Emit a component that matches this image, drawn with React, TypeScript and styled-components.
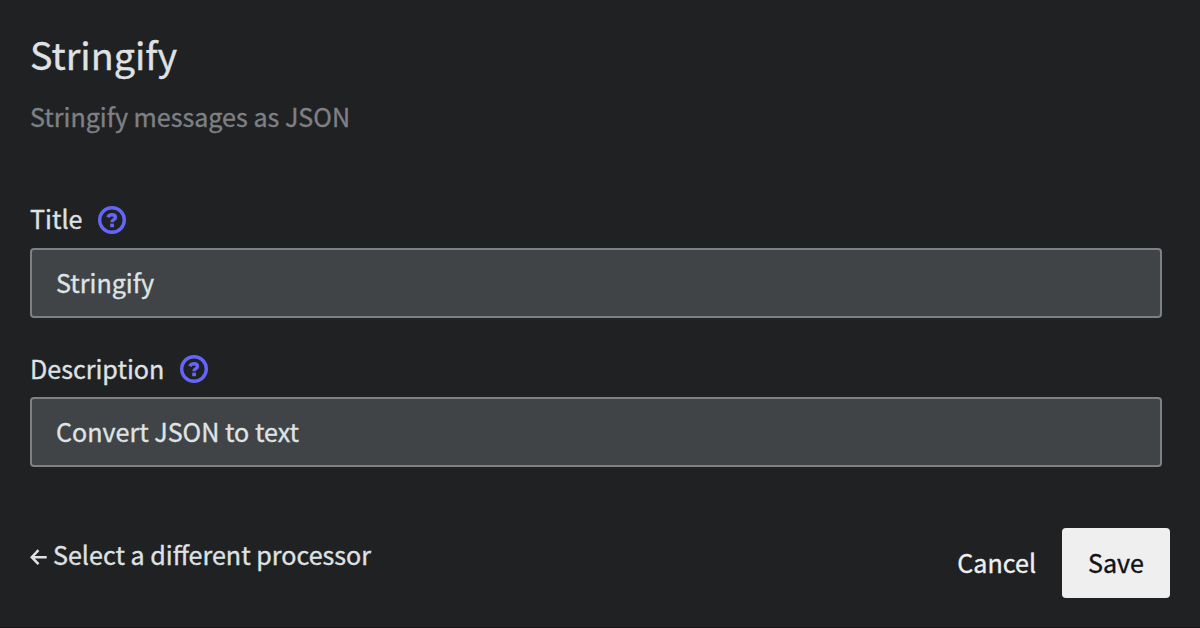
import React from "react";
import styled, { createGlobalStyle } from "styled-components";

const GlobalStyle = createGlobalStyle`
  *, *::before, *::after { box-sizing: border-box; }
  body {
    margin: 0;
    background: #202123;
    color: #dfe1e3;
    font-family: "Noto Sans CJK SC", "Noto Sans", sans-serif;
    font-size: 25.1px;
    line-height: 36px;
    -webkit-text-stroke: 0.35px currentColor;
  }
`;

const Panel = styled.main`
  display: flex;
  flex-direction: column;
  height: 628px;
  padding: 24px 30px 29px;
  border-bottom: 1px solid #1a1419;
  overflow: hidden;
`;

const Heading = styled.h1`
  margin: 0;
  font-size: 37.7px;
  font-weight: 400;
  line-height: 60px;
`;

const Subtitle = styled.p`
  margin: 14px 0 0;
  color: #7e8084;
`;

const Form = styled.form`
  display: flex;
  flex-direction: column;
  flex: 1;
  margin-top: 68px;
`;

const Field = styled.div`
  display: flex;
  flex-direction: column;
  gap: 10px;
  width: 1132px;
  margin-bottom: 33px;
`;

const LabelRow = styled.div<{ $lift: number }>`
  display: flex;
  align-items: center;
  gap: 15.5px;
  height: 36px;

  label {
    padding-bottom: ${(p) => p.$lift}px;
  }
`;

const HelpIcon = styled.svg`
  display: block;
  width: 28px;
  height: 28px;
  color: #6466fa;
`;

const Input = styled.input`
  height: 70px;
  padding: 0 24px 2px;
  border: 2px solid #7e8084;
  border-radius: 4px;
  outline: none;
  background: #404447;
  color: #dfe3e5;
  font: inherit;
  -webkit-text-stroke: inherit;
`;

const Footer = styled.footer`
  display: flex;
  align-items: flex-start;
  justify-content: space-between;
  margin-top: auto;
`;

const BackLink = styled.a`
  display: flex;
  align-items: center;
  gap: 6px;
  margin-top: 8px;
`;

const Arrow = styled.svg`
  display: block;
  width: 17px;
  height: 16px;
  margin-top: 5px;
`;

const Actions = styled.div`
  display: flex;
`;

const Button = styled.button<{ $primary?: boolean }>`
  height: 70px;
  padding: 0 26px 2px;
  border: 0;
  border-radius: 4px;
  background: ${(p) => (p.$primary ? "#efefef" : "transparent")};
  color: ${(p) => (p.$primary ? "#111214" : "#efefef")};
  font: inherit;
  -webkit-text-stroke: inherit;
`;

function Help() {
  return (
    <HelpIcon viewBox="0 0 28 28" fill="none" stroke="currentColor" aria-hidden="true">
      <circle cx="14" cy="14" r="12.3" strokeWidth="3.4" />
      <path d="M9.8 11.3C10.6 9.5 12.1 8.8 13.9 8.8C16 8.8 17.5 9.8 17.5 11.4C17.5 13.8 14 13.6 14 16.3" strokeWidth="3.4" />
      <rect x="12.2" y="17.6" width="3.8" height="3.6" fill="currentColor" stroke="none" />
    </HelpIcon>
  );
}

function TextField({ id, label, value, lift }: { id: string; label: string; value: string; lift: number }) {
  return (
    <Field>
      <LabelRow $lift={lift}>
        <label htmlFor={id}>{label}</label>
        <Help />
      </LabelRow>
      <Input id={id} defaultValue={value} spellCheck={false} />
    </Field>
  );
}

export default function App() {
  return (
    <>
      <GlobalStyle />
      <Panel>
        <Heading>Stringify</Heading>
        <Subtitle>Stringify messages as JSON</Subtitle>
        <Form onSubmit={(e) => e.preventDefault()}>
          <TextField id="title" label="Title" value="Stringify" lift={4} />
          <TextField id="description" label="Description" value="Convert JSON to text" lift={2} />
          <Footer>
            <BackLink>
              <Arrow viewBox="0 0 17 16" fill="none" stroke="currentColor" strokeWidth="2.5" aria-hidden="true">
                <path d="M16.7 8.2H2M8.5 1.2L1.8 8.2L8.5 15.2" />
              </Arrow>
              <span>Select a different processor</span>
            </BackLink>
            <Actions>
              <Button type="button">Cancel</Button>
              <Button type="submit" $primary>Save</Button>
            </Actions>
          </Footer>
        </Form>
      </Panel>
    </>
  );
}
